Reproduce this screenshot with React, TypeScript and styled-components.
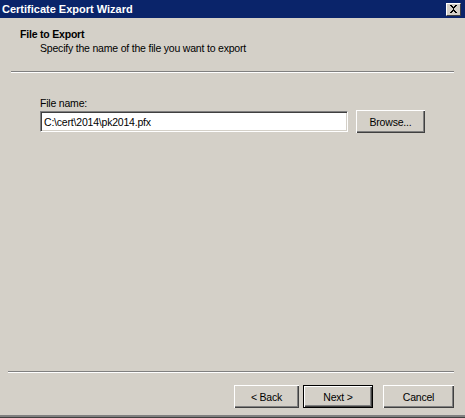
import React from 'react';
import styled, { createGlobalStyle } from 'styled-components';

const GlobalStyle = createGlobalStyle`
  html, body {
    margin: 0;
    padding: 0;
    background: #d4d0c8;
  }
  body {
    font-family: "Liberation Sans", Arial, sans-serif;
    font-size: 10.5px;
    letter-spacing: -0.2px;
    color: #000;
  }
`;

const Window = styled.div`
  width: 465px;
  height: 418px;
  box-sizing: border-box;
  display: flex;
  flex-direction: column;
  background: #d4d0c8;
  border-bottom: 1px solid #404040;
  box-shadow: inset 0 -2px 0 #808080;
`;

const TitleBar = styled.div`
  height: 18px;
  flex: none;
  display: flex;
  align-items: center;
  justify-content: space-between;
  padding: 0 4px 0 2px;
  background: #0a246a;
  color: #fff;
  font-weight: bold;
  font-size: 11px;
  letter-spacing: 0;
`;

const CloseButton = styled.div`
  width: 15px;
  height: 13px;
  box-sizing: border-box;
  display: flex;
  align-items: center;
  justify-content: center;
  background: #d4d0c8;
  border-top: 1px solid #fff;
  border-left: 1px solid #fff;
  border-right: 1px solid #404040;
  border-bottom: 1px solid #404040;
`;

const Header = styled.div`
  padding: 10px 0 0 20px;
  height: 53px;
  box-sizing: border-box;
  display: flex;
  flex-direction: column;
  gap: 1px;
`;

const HeaderTitle = styled.div`
  font-weight: bold;
  line-height: 13px;
`;

const HeaderSub = styled.div`
  margin-left: 20px;
  line-height: 13px;
`;

const Separator = styled.div<{ $left: number; $right: number }>`
  height: 0;
  margin: 0 ${p => p.$right}px 0 ${p => p.$left}px;
  border-top: 1px solid #808080;
  border-bottom: 1px solid #fff;
`;

const Body = styled.div`
  flex: 1;
  padding: 24px 0 0 40px;
`;

const Label = styled.div`
  line-height: 13px;
  margin-bottom: 0;
`;

const FieldRow = styled.div`
  display: flex;
  align-items: center;
  gap: 8px;
`;

const TextBox = styled.div`
  width: 308px;
  height: 21px;
  box-sizing: border-box;
  display: flex;
  align-items: center;
  padding-left: 3px;
  background: #fff;
  border-top: 1px solid #808080;
  border-left: 1px solid #808080;
  border-right: 1px solid #fff;
  border-bottom: 1px solid #fff;
  box-shadow: inset 1px 1px 0 #404040, inset -1px -1px 0 #d4d0c8;
`;

const Button = styled.div<{ $width: number; $default?: boolean }>`
  width: ${p => p.$width}px;
  height: 23px;
  box-sizing: border-box;
  display: flex;
  align-items: center;
  justify-content: center;
  background: #d4d0c8;
  border: ${p => (p.$default ? '1px solid #000' : 'none')};
  box-shadow: inset 1px 1px 0 #fff, inset -1px -1px 0 #404040, inset -2px -2px 0 #808080;
`;

const Footer = styled.div`
  display: flex;
  justify-content: flex-end;
  align-items: center;
  padding: 12px 11px 9px 0;
`;

const Gap = styled.div<{ $w: number }>`
  width: ${p => p.$w}px;
`;

const CloseIcon = () => (
  <svg width="9" height="8" viewBox="0 0 9 8">
    <path d="M1 0h2v1h1v1h1V1h1V0h2v1H7v1H6v1H5v2h1v1h1v1h1v1H6V7H5V6H4v1H3v1H1V7h1V6h1V5h1V3H3V2H2V1H1z" fill="#000" />
  </svg>
);

export default function App() {
  return (
    <>
      <GlobalStyle />
      <Window>
        <TitleBar>
          <span>Certificate Export Wizard</span>
          <CloseButton>
            <CloseIcon />
          </CloseButton>
        </TitleBar>
        <Header>
          <HeaderTitle>File to Export</HeaderTitle>
          <HeaderSub>Specify the name of the file you want to export</HeaderSub>
        </Header>
        <Separator $left={11} $right={11} />
        <Body>
          <Label>File name:</Label>
          <FieldRow>
            <TextBox>C:\cert\2014\pk2014.pfx</TextBox>
            <Button $width={69}>Browse...</Button>
          </FieldRow>
        </Body>
        <Separator $left={8} $right={11} />
        <Footer>
          <Button $width={65}>&lt; Back</Button>
          <Gap $w={4} />
          <Button $width={70} $default>Next &gt;</Button>
          <Gap $w={10} />
          <Button $width={71}>Cancel</Button>
        </Footer>
      </Window>
    </>
  );
}
